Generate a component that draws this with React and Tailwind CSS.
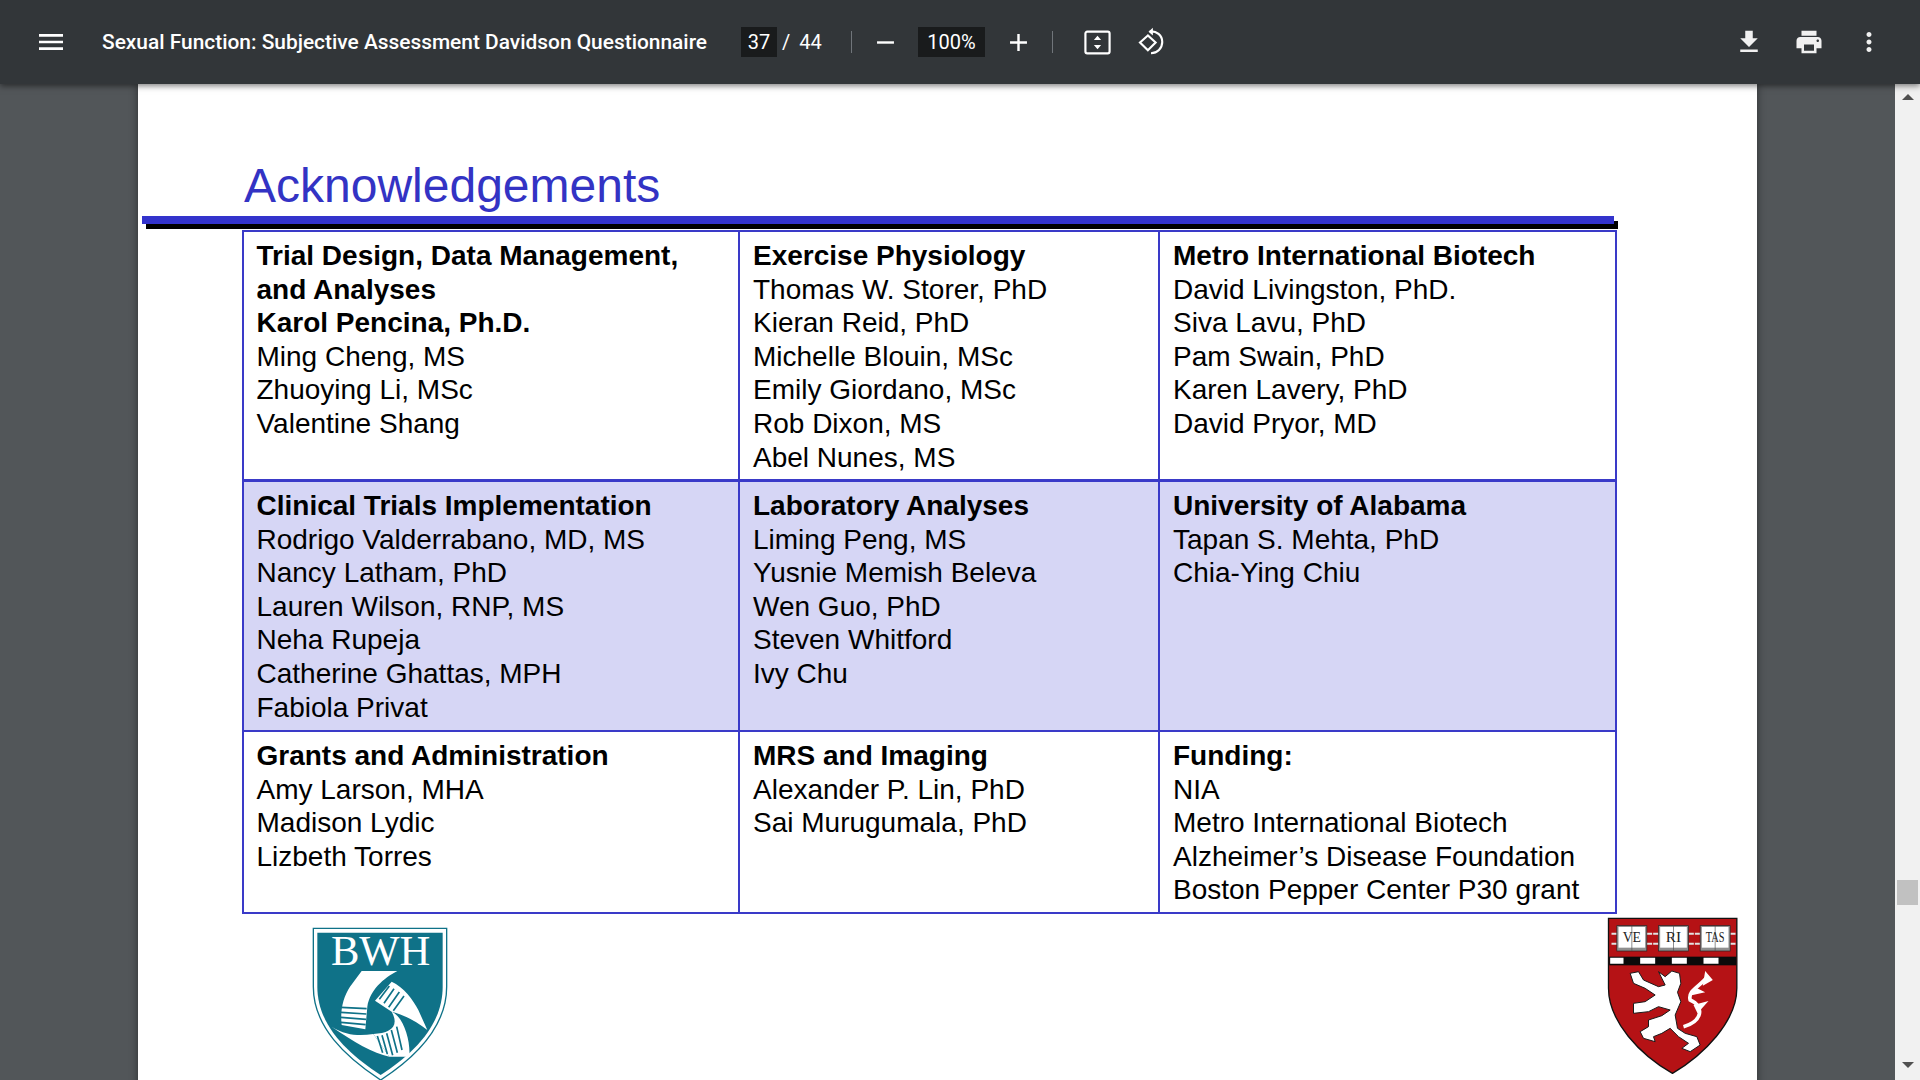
const MenuIcon = () => (
  <svg width="32" height="32" viewBox="0 0 24 24" fill="#fff"><path d="M3 18h18v-2H3v2zm0-5h18v-2H3v2zm0-7v2h18V6H3z" /></svg>
);

const MinusIcon = () => (
  <svg width="29" height="29" viewBox="0 0 24 24" fill="#fff"><path d="M5 11h14v2H5z" /></svg>
);

const PlusIcon = () => (
  <svg width="29" height="29" viewBox="0 0 24 24" fill="#fff"><path d="M19 13h-6v6h-2v-6H5v-2h6V5h2v6h6v2z" /></svg>
);

const FitIcon = () => (
  <svg width="29" height="29" viewBox="0 0 24 24" fill="none">
    <rect x="2" y="3" width="20" height="18" rx="1.5" stroke="#fff" strokeWidth="1.8" />
    <path d="M12 6.5l3 3.5H9zM12 17.5L9 14h6z" fill="#fff" />
  </svg>
);

const RotateIcon = () => (
  <svg width="30" height="30" viewBox="0 0 24 24" fill="none" stroke="#fff" strokeWidth="1.7">
    <path d="M9.5 6.8L3.2 12.4l6.3 6.2 6.2-6.2z" />
    <path d="M11 3.6c5.4-.6 10 3 10 8.4 0 5-4 9-9 9" />
    <path d="M13.5 0.6L10 3.7l3.5 3.1z" fill="#fff" stroke="none" />
  </svg>
);

const DownloadIcon = () => (
  <svg width="30" height="30" viewBox="0 0 24 24" fill="#f1f1f1"><path d="M19 9h-4V3H9v6H5l7 7 7-7zM5 18v2h14v-2H5z" /></svg>
);

const PrintIcon = () => (
  <svg width="30" height="30" viewBox="0 0 24 24" fill="#f1f1f1"><path d="M19 8H5c-1.66 0-3 1.34-3 3v6h4v4h12v-4h4v-6c0-1.66-1.34-3-3-3zm-3 11H8v-5h8v5zm3-7c-.55 0-1-.45-1-1s.45-1 1-1 1 .45 1 1-.45 1-1 1zm-1-9H6v4h12V3z" /></svg>
);

const MoreIcon = () => (
  <svg width="30" height="30" viewBox="0 0 24 24" fill="#f1f1f1"><path d="M12 8c1.1 0 2-.9 2-2s-.9-2-2-2-2 .9-2 2 .9 2 2 2zm0 2c-1.1 0-2 .9-2 2s.9 2 2 2 2-.9 2-2-.9-2-2-2zm0 6c-1.1 0-2 .9-2 2s.9 2 2 2 2-.9 2-2-.9-2-2-2z" /></svg>
);

const BwhLogo = () => (
  <svg width="200" height="167" viewBox="0 15 600 501" className="block">
    <path d="M70 55H470V230C470 350 380 440 272 510C165 440 70 350 70 230Z" fill="#fff" stroke="#0f7288" strokeWidth="4" />
    <path d="M82 68H458V230C458 345 372 430 272 495C172 430 82 345 82 230Z" fill="#0f7288" />
    <text x="272" y="166" textAnchor="middle" fontSize="128" fill="#fff" fontFamily="'Liberation Serif', serif">BWH</text>
    <path d="M215 183H322C280 205 240 240 232 290L226 358L155 345C150 300 160 260 180 230Z" fill="#fff" />
    <path d="M255 272L305 215C340 230 370 270 385 300L412 360C380 335 345 315 305 305Z" fill="#fff" />
    <path d="M305 305C340 320 362 390 358 440L298 440L250 372C300 370 330 350 305 305Z" fill="#fff" />
    <path d="M125 350C170 378 210 378 250 372L298 440C250 430 190 395 125 350Z" fill="#fff" />
    <g stroke="#0f7288" strokeWidth="5">
      <path d="M153 292L230 296M153 307L229 312M153 322L228 328M153 337L227 344" />
      <path d="M268 268L298 228M282 280L312 236M296 292L328 246M310 302L342 258" />
      <path d="M262 378L278 428M276 376L292 432M290 370L308 436M304 360L322 428M320 350L336 420" />
    </g>
  </svg>
);

const Book = ({ x, label, textWidth }) => (
  <g>
    <path d={`M${x - 16} 86h16M${x - 16} 116h16M${x + 90} 86h16M${x + 90} 116h16`} stroke="#e2e2e2" strokeWidth="6" />
    <rect x={x} y="62" width="90" height="76" fill="#8f8f8f" stroke="#222" strokeWidth="2" />
    <rect x={x + 5} y="66" width="80" height="62" fill="#fff" />
    <path d={`M${x + 45} 62v76`} stroke="#555" strokeWidth="2" />
    <text
      x={x + 45}
      y="112"
      textAnchor="middle"
      fontSize="46"
      fill="#222"
      textLength={textWidth}
      lengthAdjust="spacingAndGlyphs"
      fontFamily="'Liberation Serif', serif"
    >
      {label}
    </text>
  </g>
);

const HarvardLogo = () => (
  <svg width="167" height="167" viewBox="0 30 500 501" className="block">
    <path d="M55 40H440V250C440 350 340 450 247 505C150 450 55 350 55 250Z" fill="#b51215" stroke="#111" strokeWidth="4" />
    <rect x="57" y="155" width="381" height="26" fill="#0a0a0a" />
    <path d="M60 158h40v18H60zM150 158h45v18H150zM245 158h45v18H245zM340 158h45v18H340z" fill="#fff" />
    <Book x={80} label="VE" textWidth={55} />
    <Book x={205} label="RI" textWidth={46} />
    <Book x={330} label="TAS" textWidth={56} />
    <path
      d="M205 200L225 215L245 198L268 205L272 235L262 262L272 290L255 330L262 370L285 385L320 395L330 420L300 440L275 430L295 415L265 395L240 370L215 385L190 395L195 410L160 400L150 380L175 365L175 345L215 332L240 315L205 305L175 320L130 325L130 295L165 290L195 270L165 250L130 235L120 205L145 200L160 225L205 245L225 240Z"
      fill="#fff"
      stroke="#1a1a1a"
      strokeWidth="3"
    />
    <path d="M280 365C335 350 345 305 300 285C292 255 330 245 352 215" fill="none" stroke="#fff" strokeWidth="11" />
    <path d="M345 198L368 225L338 242ZM310 300L355 288L322 325ZM298 272L345 262L318 248Z" fill="#fff" />
  </svg>
);

const columns = [
  [
    { bold: ['Trial Design, Data Management,', 'and Analyses', 'Karol Pencina, Ph.D.'], names: ['Ming Cheng, MS', 'Zhuoying Li, MSc', 'Valentine Shang'] },
    { bold: ['Exercise Physiology'], names: ['Thomas W. Storer, PhD', 'Kieran Reid, PhD', 'Michelle Blouin, MSc', 'Emily Giordano, MSc', 'Rob Dixon, MS', 'Abel Nunes, MS'] },
    { bold: ['Metro International Biotech'], names: ['David Livingston, PhD.', 'Siva Lavu, PhD', 'Pam Swain, PhD', 'Karen Lavery, PhD', 'David Pryor, MD'] },
  ],
  [
    { bold: ['Clinical Trials Implementation'], names: ['Rodrigo Valderrabano, MD, MS', 'Nancy Latham, PhD', 'Lauren Wilson, RNP, MS', 'Neha Rupeja', 'Catherine Ghattas, MPH', 'Fabiola Privat'] },
    { bold: ['Laboratory Analyses'], names: ['Liming Peng, MS', 'Yusnie Memish Beleva', 'Wen Guo, PhD', 'Steven Whitford', 'Ivy Chu'] },
    { bold: ['University of Alabama'], names: ['Tapan S. Mehta, PhD', 'Chia-Ying Chiu'] },
  ],
  [
    { bold: ['Grants and Administration'], names: ['Amy Larson, MHA', 'Madison Lydic', 'Lizbeth Torres'] },
    { bold: ['MRS and Imaging'], names: ['Alexander P. Lin, PhD', 'Sai Murugumala, PhD'] },
    { bold: ['Funding:'], names: ['NIA', 'Metro International Biotech', 'Alzheimer’s Disease Foundation', 'Boston Pepper Center P30 grant'] },
  ],
];

const rowStyles = [
  'h-[250px] bg-white border-b-[3px] border-b-[#3a3ac8]',
  'h-[250px] bg-[#d6d6f5] border-b-2 border-b-[#3a3ac8]',
  'h-[180px] bg-white',
];

const Cell = ({ cell, rowClass, first, last }) => (
  <div className={`${first ? 'pl-[12.5px]' : 'pl-[13px]'} pt-[7px] text-[28px] leading-[33.6px] text-black ${last ? '' : 'border-r-2 border-r-[#3a3ac8]'} ${rowClass}`}>
    {cell.bold.map(line => <p key={line} className="font-bold">{line}</p>)}
    {cell.names.map(line => <p key={line}>{line}</p>)}
  </div>
);

const App = () => (
  <div className="flex flex-col h-screen w-screen overflow-hidden font-['Liberation_Sans',Arial,sans-serif]">
    <header className="relative z-10 flex items-center h-[84px] shrink-0 bg-[#323639] text-white shadow-[0_2px_6px_rgba(0,0,0,0.5)] font-['Roboto',sans-serif]">
      <div className="ml-[35px] w-[67px]"><MenuIcon /></div>
      <h1 className="w-[639px] pt-[1px] text-[20.9px] font-medium whitespace-nowrap">Sexual Function: Subjective Assessment Davidson Questionnaire</h1>
      <div className="flex items-center justify-center w-[36px] h-[30px] bg-[#191b1c] text-[20px]">37</div>
      <span className="ml-[5px] w-[69px] text-[20px] whitespace-nowrap">/ &#8201;44</span>
      <div className="w-px h-[22px] bg-[#70757a]" />
      <div className="flex justify-center ml-[19px] w-[29px]"><MinusIcon /></div>
      <div className="flex items-center justify-center ml-[18px] w-[67px] h-[30px] bg-[#191b1c] text-[20px]">100%</div>
      <div className="flex justify-center ml-[19px] w-[29px]"><PlusIcon /></div>
      <div className="ml-[19px] w-px h-[22px] bg-[#70757a]" />
      <div className="ml-[30px]"><FitIcon /></div>
      <div className="ml-[24px]"><RotateIcon /></div>
      <div className="flex items-center gap-[30px] ml-auto mr-[36px]">
        <DownloadIcon />
        <PrintIcon />
        <MoreIcon />
      </div>
    </header>

    <div className="flex flex-1 min-h-0">
      <main className="flex justify-center flex-1 overflow-hidden bg-[#525659]">
        <div className="w-[1619px] h-[1200px] shrink-0 bg-white shadow-[0_0_8px_rgba(0,0,0,0.45)]">
          <h2 className="pl-[106px] pt-[73px] h-[132px] text-[48px] leading-[58px] text-[#3333c4]">Acknowledgements</h2>
          <div className="ml-[4px] w-[1472px] h-[8px] bg-[#3333cc] shadow-[4px_5px_0_#000]" />
          <div className="ml-[104px] mt-[6px] w-[1375px] border-2 border-[#3a3ac8]">
            {columns.map((row, i) => (
              <div key={i} className="grid grid-cols-[496px_420px_1fr]">
                {row.map((cell, j) => (
                  <Cell key={j} cell={cell} rowClass={rowStyles[i]} first={j === 0} last={j === 2} />
                ))}
              </div>
            ))}
          </div>
          <div className="flex justify-between mt-[1px] ml-[152px] w-[1467px]">
            <BwhLogo />
            <HarvardLogo />
          </div>
        </div>
      </main>

      <aside className="flex flex-col items-center w-[25px] shrink-0 bg-[#f1f1f1]">
        <div className="mt-[10px] border-x-[6px] border-b-[6px] border-x-transparent border-b-[#505050]" />
        <div className="mt-[780px] w-[21px] h-[25px] bg-[#c1c1c1]" />
        <div className="mt-[157px] border-x-[6px] border-t-[6px] border-x-transparent border-t-[#505050]" />
      </aside>
    </div>
  </div>
);

export default App;
